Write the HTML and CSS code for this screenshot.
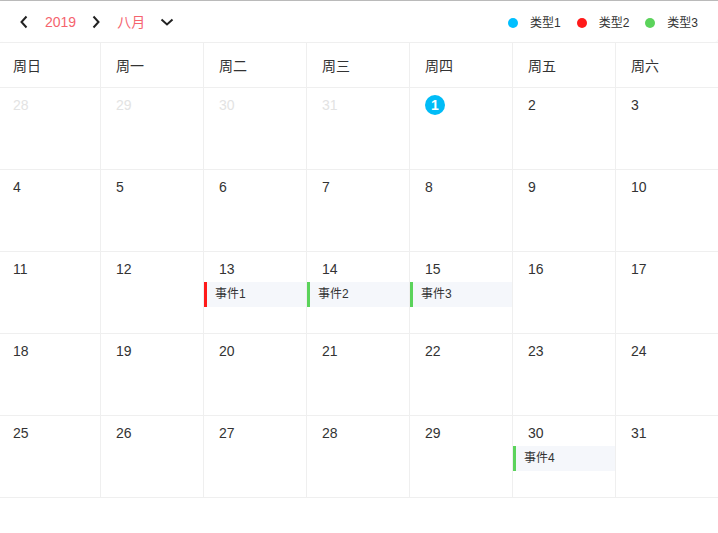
FILE: index.html
```html
<!DOCTYPE html>
<html>
<head>
<meta charset="utf-8">
<link rel="stylesheet" href="styles.css">
</head>
<body>
<div class="page">
  <header class="toolbar">
    <div class="nav">
      <svg class="chev chev-left" width="10" height="14" viewBox="0 0 10 14"><path d="M7.5 1.5 L2.5 7 L7.5 12.5" fill="none" stroke="#222" stroke-width="2"/></svg>
      <span class="year">2019</span>
      <svg class="chev chev-right" width="10" height="14" viewBox="0 0 10 14"><path d="M2.5 1.5 L7.5 7 L2.5 12.5" fill="none" stroke="#222" stroke-width="2"/></svg>
      <span class="month">八月</span>
      <svg class="chev chev-down" width="14" height="10" viewBox="0 0 14 10"><path d="M1.5 2.5 L7 7.5 L12.5 2.5" fill="none" stroke="#222" stroke-width="2"/></svg>
    </div>
    <div class="legend">
      <span class="dot dot-1"></span><span class="legend-label">类型1</span>
      <span class="dot dot-2"></span><span class="legend-label">类型2</span>
      <span class="dot dot-3"></span><span class="legend-label">类型3</span>
    </div>
  </header>
  <div class="calendar">
    <div class="head">周日</div><div class="head">周一</div><div class="head">周二</div><div class="head">周三</div><div class="head">周四</div><div class="head">周五</div><div class="head">周六</div>

    <div class="day other"><span class="num">28</span></div>
    <div class="day other"><span class="num">29</span></div>
    <div class="day other"><span class="num">30</span></div>
    <div class="day other"><span class="num">31</span></div>
    <div class="day"><span class="num today">1</span></div>
    <div class="day"><span class="num">2</span></div>
    <div class="day"><span class="num">3</span></div>

    <div class="day"><span class="num">4</span></div>
    <div class="day"><span class="num">5</span></div>
    <div class="day"><span class="num">6</span></div>
    <div class="day"><span class="num">7</span></div>
    <div class="day"><span class="num">8</span></div>
    <div class="day"><span class="num">9</span></div>
    <div class="day"><span class="num">10</span></div>

    <div class="day"><span class="num">11</span></div>
    <div class="day"><span class="num">12</span></div>
    <div class="day"><span class="num">13</span><div class="event ev-2">事件1</div></div>
    <div class="day"><span class="num">14</span><div class="event ev-3">事件2</div></div>
    <div class="day"><span class="num">15</span><div class="event ev-3">事件3</div></div>
    <div class="day"><span class="num">16</span></div>
    <div class="day"><span class="num">17</span></div>

    <div class="day"><span class="num">18</span></div>
    <div class="day"><span class="num">19</span></div>
    <div class="day"><span class="num">20</span></div>
    <div class="day"><span class="num">21</span></div>
    <div class="day"><span class="num">22</span></div>
    <div class="day"><span class="num">23</span></div>
    <div class="day"><span class="num">24</span></div>

    <div class="day"><span class="num">25</span></div>
    <div class="day"><span class="num">26</span></div>
    <div class="day"><span class="num">27</span></div>
    <div class="day"><span class="num">28</span></div>
    <div class="day"><span class="num">29</span></div>
    <div class="day"><span class="num">30</span><div class="event ev-3">事件4</div></div>
    <div class="day"><span class="num">31</span></div>
  </div>
</div>
</body>
</html>
```

FILE: styles.css
```css
* { box-sizing: border-box; }
html, body {
  margin: 0;
  padding: 0;
  background: #fff;
  overflow: hidden;
}
body {
  font-family: "Liberation Sans", "Noto Sans CJK SC", sans-serif;
  color: #333;
  font-size: 14px;
}
.page {
  width: 718px;
  height: 533px;
  border-top: 1px solid #bdbdbd;
}
.toolbar {
  height: 41px;
  display: flex;
  align-items: center;
  justify-content: space-between;
  padding: 0 20px 0 19px;
  border-radius: 0 0 4px 4px;
  box-shadow: 1px 0 2px rgba(0, 0, 0, 0.06);
}
.nav {
  display: flex;
  align-items: center;
  height: 20px;
}
.chev { display: block; }
.chev-left { margin-right: 16px; }
.year {
  color: #f5646e;
  font-size: 14px;
  line-height: 20px;
}
.chev-right { margin-left: 15px; margin-right: 16px; }
.month {
  color: #f5646e;
  font-size: 14px;
  line-height: 20px;
}
.chev-down { margin-left: 15px; margin-top: 1px; }
.legend {
  display: flex;
  align-items: center;
  font-size: 12px;
  line-height: 16px;
  padding-top: 2px;
}
.dot {
  width: 10px;
  height: 10px;
  border-radius: 50%;
  margin-right: 12px;
}
.dot-1 { background: #00bfff; }
.dot-2 { background: #ff1a1a; margin-left: 16px; }
.dot-3 { background: #5bd35b; margin-left: 16px; }
.legend-label { color: #333; }

.calendar {
  display: grid;
  grid-template-columns: repeat(7, 103px);
  grid-template-rows: 45px repeat(5, 82px);
  width: 721px;
  margin-left: -3px;
  border-top: 1px solid #efefef;
}
.head, .day {
  border-left: 1px solid #efefef;
  border-bottom: 1px solid #efefef;
  padding-left: 15px;
}
.head {
  display: flex;
  align-items: center;
  font-size: 14px;
  color: #333;
}
.day {
  padding-top: 7px;
  display: flex;
  flex-direction: column;
  align-items: flex-start;
}
.num {
  display: block;
  line-height: 20px;
  font-size: 14px;
  color: #333;
}
.other .num { color: #e3e3e3; }
.today {
  width: 20px;
  height: 20px;
  border-radius: 50%;
  background: #00bcf7;
  color: #fff;
  font-weight: bold;
  text-align: center;
}
.event {
  align-self: stretch;
  margin-left: -15px;
  margin-top: 3px;
  height: 25px;
  line-height: 25px;
  background: #f5f7fb;
  border-left: 3px solid #5bd35b;
  padding-left: 8px;
  font-size: 12px;
  color: #333;
}
.ev-2 { border-left-color: #ff1a1a; }
.ev-3 { border-left-color: #5bd35b; }
```
